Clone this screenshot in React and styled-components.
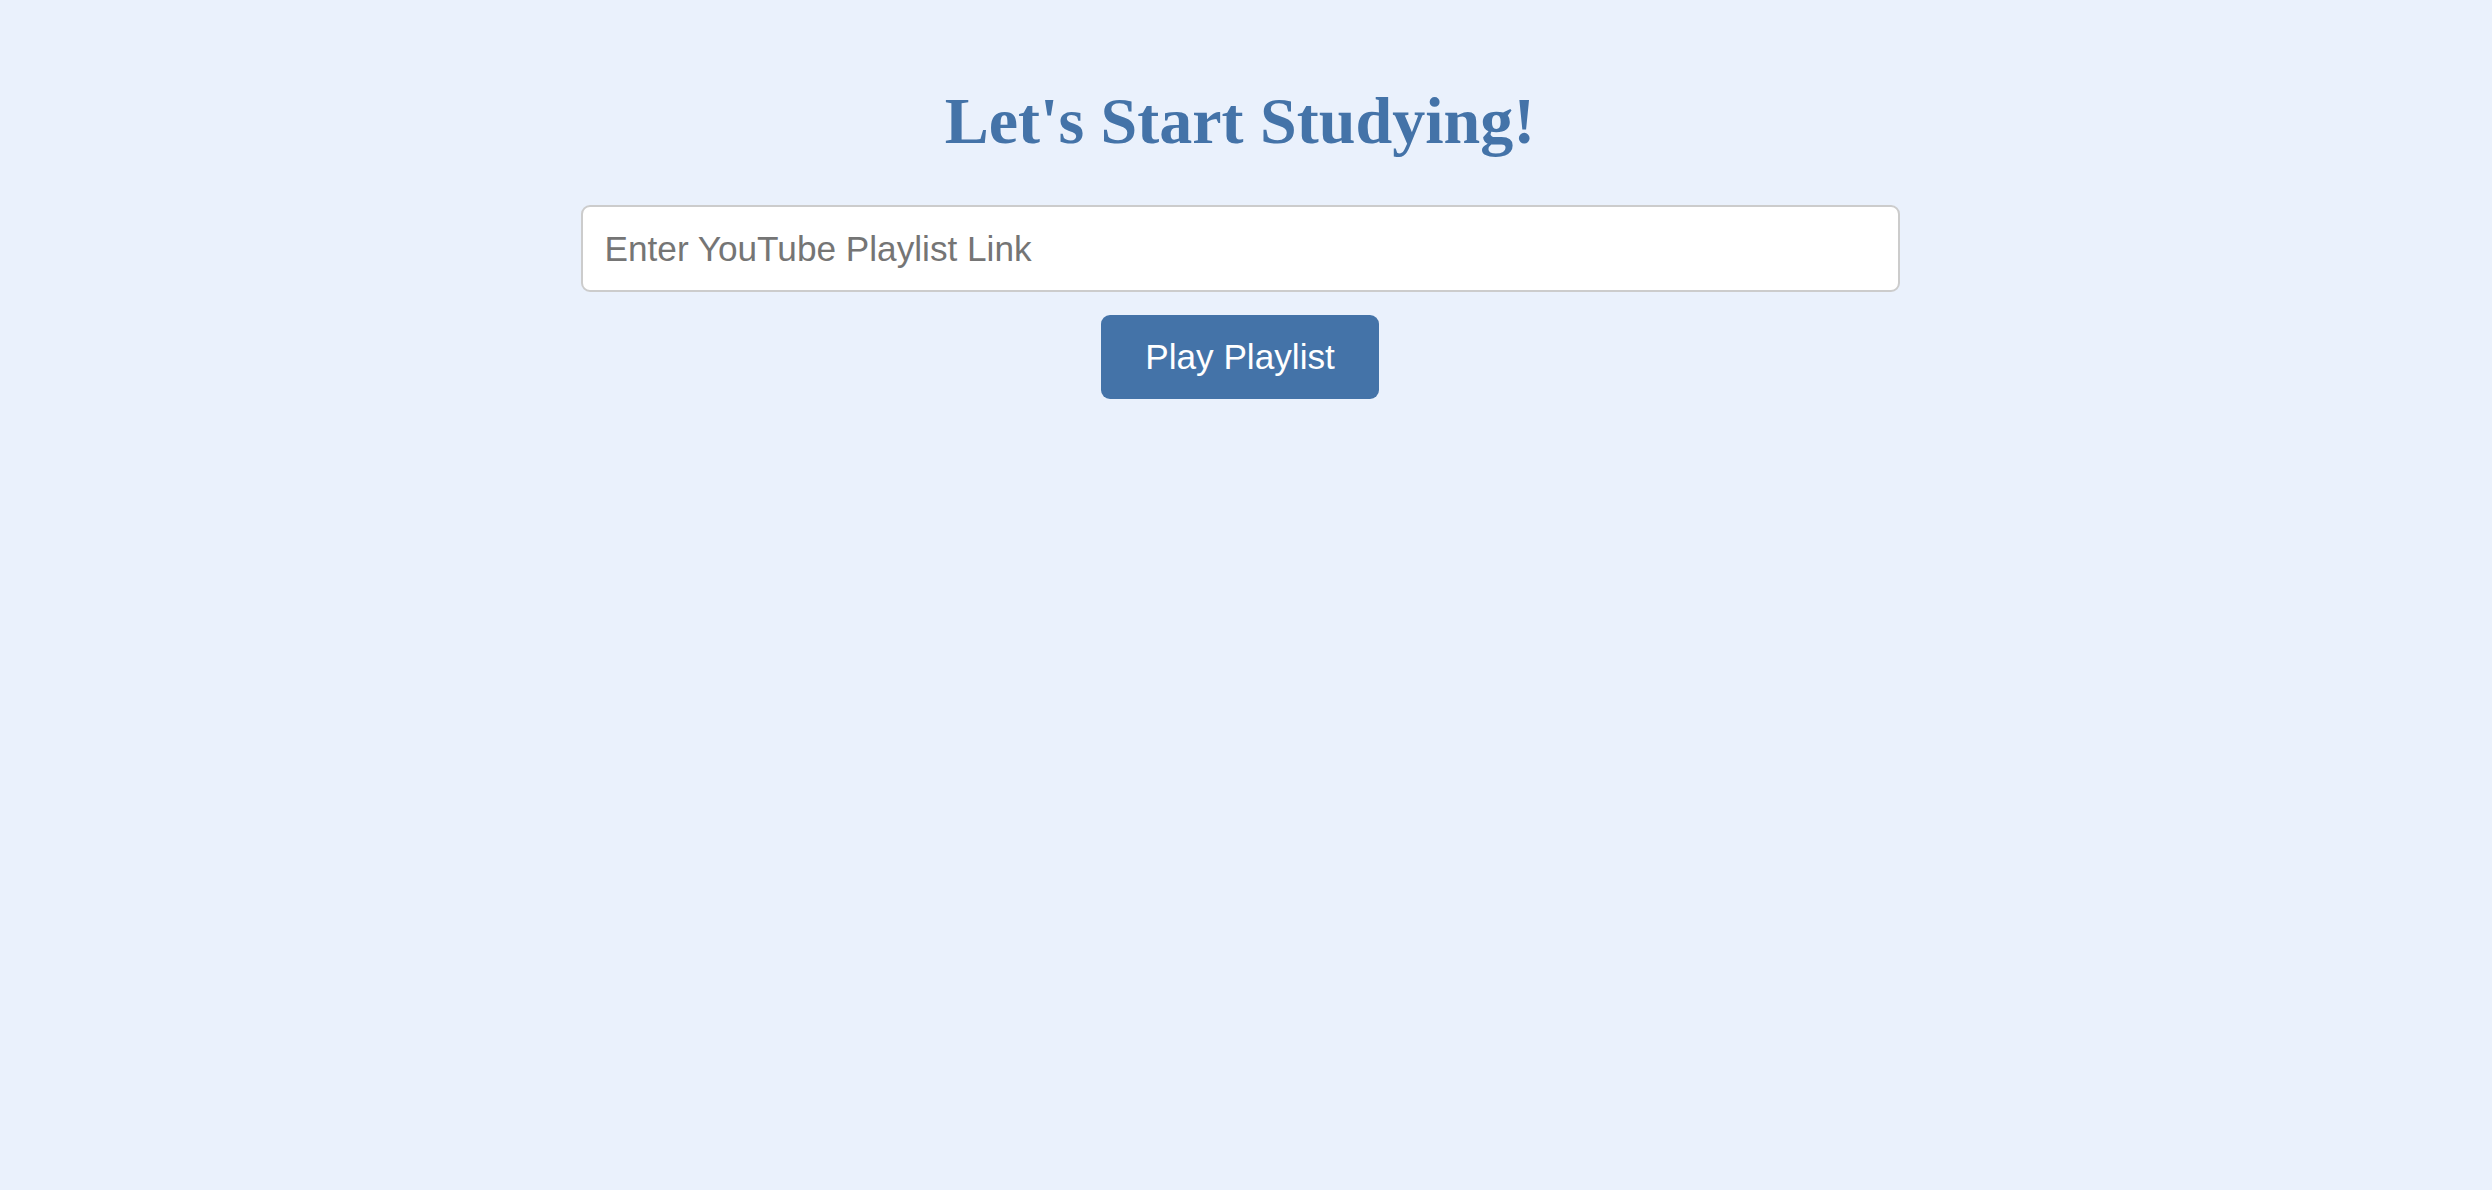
import React from "react";
import styled, { createGlobalStyle } from "styled-components";

const GlobalStyle = createGlobalStyle`
  html, body {
    margin: 0;
    padding: 0;
    background: #eaf1fc;
  }
  body {
    font-family: "Liberation Sans", Arial, sans-serif;
  }
`;

const Page = styled.main`
  min-height: 1190px;
  background: #eaf1fc;
  display: flex;
  flex-direction: column;
  align-items: center;
  padding: 83px 12px 0 0;
  box-sizing: border-box;
`;

const Title = styled.h1`
  margin: 0 0 46px;
  font-family: "Liberation Serif", "Times New Roman", serif;
  font-weight: bold;
  font-size: 66px;
  line-height: 76px;
  color: #4473a8;
`;

const Form = styled.form`
  display: flex;
  flex-direction: column;
  align-items: center;
  gap: 23px;
`;

const LinkInput = styled.input`
  box-sizing: border-box;
  width: 1319px;
  height: 87px;
  padding: 0 22px;
  border: 2px solid #cccccc;
  border-radius: 9px;
  background: #ffffff;
  font-family: "Liberation Sans", Arial, sans-serif;
  font-size: 35.2px;
  color: #333;
  outline: none;

  &::placeholder {
    color: #757575;
  }
`;

const PlayButton = styled.button`
  box-sizing: border-box;
  height: 84px;
  padding: 0 44px;
  border: none;
  border-radius: 9px;
  background: #4473a8;
  color: #ffffff;
  font-family: "Liberation Sans", Arial, sans-serif;
  font-size: 35.2px;
  cursor: pointer;
`;

export default function App() {
  return (
    <>
      <GlobalStyle />
      <Page>
        <Title>Let's Start Studying!</Title>
        <Form onSubmit={(e) => e.preventDefault()}>
          <LinkInput type="text" placeholder="Enter YouTube Playlist Link" />
          <PlayButton type="submit">Play Playlist</PlayButton>
        </Form>
      </Page>
    </>
  );
}
